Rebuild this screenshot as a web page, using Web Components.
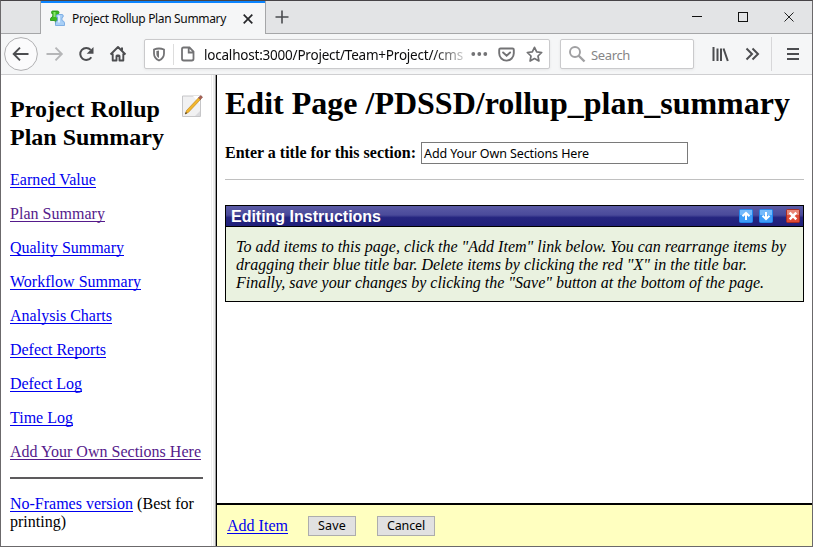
<!DOCTYPE html>
<html lang="en">
<head>
<meta charset="utf-8">
<title>Project Rollup Plan Summary</title>
<style>
html,body{margin:0;height:100%;overflow:hidden;background:#fff}
</style>
</head>
<body>
<browser-window></browser-window>
<script>
const define = (name, html, init) => {
  const t = document.createElement('template');
  t.innerHTML = html;
  customElements.define(name, class extends HTMLElement {
    constructor() {
      super();
      this.attachShadow({mode: 'open'}).append(t.content.cloneNode(true));
    }
    connectedCallback() { if (init) init(this); }
  });
};

/* One line of text, letter-spaced to fill the width given by its "w" attribute. */
define('fit-text', `<style>:host{display:inline-block;white-space:pre;flex:none;text-decoration:inherit}span{display:inline-block}</style><span><slot></slot></span>`, el => {
  const s = el.shadowRoot.querySelector('span');
  const w = +el.getAttribute('w');
  s.style.letterSpacing = '0';
  const n = el.textContent.length;
  s.style.letterSpacing = ((w - s.getBoundingClientRect().width) / n) + 'px';
});

define('nav-link', `<style>:host{display:block;height:18px;line-height:18px;color:#0000ee}
:host([visited]){color:#551a8b}a{display:block;width:max-content;height:16px;border-bottom:1px solid currentColor;color:inherit;text-decoration:none}</style><a><slot></slot></a>`);

define('push-button', `<style>:host{display:block;flex:none}button{display:flex;align-items:center;justify-content:center;width:100%;height:20px;box-sizing:border-box;border:1px solid #adadad;background:#e1e1e1;padding:0;margin:0;border-radius:0;font:12.5px/16px "Noto Sans",sans-serif;color:#000}</style><button><slot></slot></button>`);

define('tab-strip', `<style>
:host{display:flex;height:33px;background:#e3e4e6;box-sizing:border-box;font:12px/16px "Noto Sans",sans-serif;color:#0c0c0d}
.pre{width:39px;border-bottom:1px solid #a5a6a8}
.tab{width:224px;background:#f5f6f7;border:solid #a5a6a8;border-width:0 1px;display:flex;align-items:center;box-shadow:inset 0 2px #0a84ff;box-sizing:content-box}
.rest{flex:1;border-bottom:1px solid #a5a6a8;display:flex;align-items:center}
svg{display:block;flex:none}
.fav{margin:2px 6px 0 9px}
.tab fit-text{margin-top:3px}
.x{margin:3px 0 0 17px}
.plus{margin-left:9px}
.win{margin-left:auto}
</style>
<div class="pre"></div>
<div class="tab">
<svg class="fav" width="16" height="17" viewBox="0 0 16 17"><path d="M2.500 1h5q1.500 0 1.500 1.500T7.500 4l.3 3q1.700.3 1.700 2v1.500h-9V9q0-1.700 2-2L3 4Q1.500 4 1.500 2.500T2.500 1z" fill="#3db820" stroke="#1a8f0c" stroke-width=".8"/><path d="M4.500 10.500h2V13l-1 1.500z" fill="#4aa23a"/><path d="M3.500 2h2v5h-2z" fill="#8be670"/><path d="M7.500 4.500h4.500q1.300 0 1.300 1.500T12 7.500v3q2.500.5 2.500 2.500v2.500h-9V13q0-2 2-2.500v-3Q6.200 7.500 6.200 6t1.300-1.500z" fill="#a8cff6" stroke="#6ba2df" stroke-width=".8"/><path d="M8 5.500h2v7H8z" fill="#dcedff"/></svg>
<fit-text w="154">Project Rollup Plan Summary</fit-text>
<svg class="x" width="10" height="10" viewBox="0 0 10 10"><path d="M.7.7l8.600 8.600M9.300.7L.7 9.300" stroke="#26272a" stroke-width="1.700"/></svg>
</div>
<div class="rest">
<svg class="plus" width="14" height="14" viewBox="0 0 14 14"><path d="M7 .5v13M.5 7h13" stroke="#4a4b4f" stroke-width="1.600"/></svg>
<svg class="win" width="122" height="14" viewBox="0 0 122 14"><g fill="none" stroke="#111" shape-rendering="crispEdges"><path d="M2 6.500h10"/><path d="M48.500 2.500h9v9h-9z"/></g><path d="M94.500 2.500l9 9M103.500 2.500l-9 9" stroke="#222"/></svg>
</div>`);

define('nav-toolbar', `<style>
:host{display:flex;height:41px;box-sizing:border-box;background:#f5f6f7;border-bottom:1px solid #cfcfd1;align-items:center;font:13.5px/18px "Noto Sans",sans-serif}
svg{display:block;flex:none}
.url,.search{box-sizing:border-box;height:30px;border:1px solid #cacacc;border-radius:2px;background:#fff;display:flex;align-items:center;box-shadow:0 1px 3px #0001}
.url{width:406px;margin-left:1px}
.search{width:134px;margin-left:10px;color:#858587;font-size:13px}
.search fit-text{margin-top:1px}
.addr{margin:1px 0 0 9px;width:260px;overflow:hidden;color:#0c0c0d;-webkit-mask:linear-gradient(90deg,#000 228px,#0003 260px);mask:linear-gradient(90deg,#000 228px,#0003 260px)}
.addr fit-text{display:block}
</style>
<svg width="142" height="40" viewBox="0 0 142 40" fill="none" stroke="#4c4d50" stroke-width="1.900">
<circle cx="20" cy="20" r="16.400" fill="#fbfbfc" stroke="#b0b0b2" stroke-width="1"/>
<path d="M27.500 20H13M19 13.700L12.700 20l6.300 6.300"/>
<path d="M45.500 20H60M54.500 13.700l6.300 6.300-6.300 6.300" stroke="#b5b6b8"/>
<path d="M90.300 23.200a6 6 0 1 1-.6-7.300" stroke-width="2"/><path d="M92.500 13v6.800h-6.800z" fill="#4c4d50" stroke="none"/>
<path d="M109.500 20.500L117 13l7.500 7.500M111.700 19.500v7h3.800v-4.500h3v4.500h3.800v-7" stroke-linejoin="round"/><path d="M121 13.500v3" stroke-width="2"/><path d="M115.500 20.500h3v2h-3z" fill="#4c4d50" stroke="none"/>
</svg>
<div class="url">
<svg width="50" height="28" viewBox="0 0 50 28" fill="none" stroke="#737375"><path d="M14 8.500c2 0 3.500.4 5 1v4c0 3-1.700 5.500-5 7-3.300-1.500-5-4-5-7v-4c1.500-.6 3-1 5-1z" stroke-width="1.800"/><path d="M14 10.500v7.500c-2-1-2.600-2.500-2.600-4.300v-2.700z" fill="#737375" stroke="none"/><path d="M28.500 4v21" stroke="#ddd"/><path d="M38.500 7.500h6l4 4v7.300q0 1.700-1.700 1.700h-8.100q-1.700 0-1.700-1.700V9.200q0-1.700 1.500-1.700zM43.700 8v4.500h4.500" stroke-width="1.800"/></svg>
<div class="addr"><fit-text w="259">localhost:3000/Project/Team+Project//cms</fit-text></div>
<svg width="84" height="28" viewBox="-.5 0 84 28" fill="none" stroke="#737375" stroke-width="1.900"><g fill="#737375" stroke="none"><circle cx="8.800" cy="14" r="1.900"/><circle cx="14.800" cy="14" r="1.900"/><circle cx="20.800" cy="14" r="1.900"/></g><path d="M36 8.500h12q1.300 0 1.300 1.300v3.500a7.300 7.300 0 0 1-14.600 0V9.800q0-1.300 1.300-1.300z"/><path d="M38.600 12.500l3.500 3.300 3.500-3.300" stroke-linecap="round"/><path d="M70 7.300l2.200 4.600 5 .6-3.700 3.500.9 5-4.400-2.500-4.400 2.500.9-5-3.700-3.500 5-.6z" stroke-width="1.700" stroke-linejoin="round"/></svg>
</div>
<div class="search">
<svg width="30" height="28" viewBox="0 0 30 28" fill="none" stroke="#a0a0a2"><circle cx="14" cy="12" r="5" stroke-width="1.900"/><path d="M17.500 15.500l6 6" stroke-width="2.400"/></svg>
<fit-text w="39">Search</fit-text>
</div>
<svg width="117" height="40" viewBox="0 0 117 40" fill="none" stroke="#4c4d50" stroke-width="2"><path d="M19.500 13v14M23.500 14.500V27M27 14.500V27M29.500 14.500L33.800 27" stroke-width="2"/><path d="M52.500 14.500l5.500 5.500-5.500 5.500M58.500 14.500l5.500 5.500-5.500 5.500"/><path d="M77.500 3v34" stroke="#d7d7d9" stroke-width="1"/><path d="M93 15h12M93 20h12M93 25h12"/></svg>
`);

define('side-nav', `<style>
:host{display:block;width:210px;box-sizing:border-box;padding:20px 7px 0 9px;font:16px/18px "Liberation Serif",serif;color:#000;background:#fff}
header{display:flex;justify-content:space-between;height:56px;margin-bottom:20px}
h2{margin:0;font:bold 24px/28px "Liberation Serif",serif}
h2 fit-text{display:block}
header svg{margin:-1px 1px 0 0}
nav{display:grid;gap:16px}
hr{height:2px;border:0;background:#5d5b5d;margin:16px 0;width:193px}
.foot{display:flex}
.foot fit-text{display:block}
</style>
<header><h2><fit-text w="150">Project Rollup</fit-text><fit-text w="154">Plan Summary</fit-text></h2>
<svg width="22" height="24" viewBox="0 0 22 24"><path d="M1.500 2h18v20.500h-18z" fill="#f1f1f2" stroke="#c6c6c8"/><path d="M14 22l5-5v5z" fill="#d9d9dc"/><path d="M12 2h7v8z" fill="#fff"/><path d="M4.300 20l1.200-3.500L17.500 3.800l2 1.700L7.500 18.300z" fill="#f2b62c" stroke="#bb7e12" stroke-width=".6"/><path d="M17.500 3.800l2.200-2.300 1.800 1.600-2 2.400z" fill="#ad6152" stroke="#794640" stroke-width=".6"/><path d="M4 20.300l.9-2.300 1.200 1.200z" fill="#333"/></svg></header>
<nav>
<nav-link><fit-text w="86">Earned Value</fit-text></nav-link>
<nav-link visited><fit-text w="95">Plan Summary</fit-text></nav-link>
<nav-link><fit-text w="114">Quality Summary</fit-text></nav-link>
<nav-link><fit-text w="131">Workflow Summary</fit-text></nav-link>
<nav-link><fit-text w="102">Analysis Charts</fit-text></nav-link>
<nav-link><fit-text w="96">Defect Reports</fit-text></nav-link>
<nav-link><fit-text w="72">Defect Log</fit-text></nav-link>
<nav-link><fit-text w="63">Time Log</fit-text></nav-link>
<nav-link visited><fit-text w="191">Add Your Own Sections Here</fit-text></nav-link>
</nav><hr>
<div class="foot"><nav-link><fit-text w="123">No-Frames version</fit-text></nav-link><fit-text w="61"> (Best for</fit-text></div>
<fit-text w="56">printing)</fit-text>`);

define('instruction-panel', `<style>
:host{display:block;box-sizing:border-box;height:97px;border:1px solid #000;background:#eaf2e0;font:italic 16px/18px "Liberation Serif",serif}
header{display:flex;align-items:center;height:20px;border-bottom:1px solid #000;background:linear-gradient(#5b5ba6 0,#4a4a9a 45%,#25257f 58%,#20207b);color:#fff;font:bold 16px/20px "Liberation Sans",sans-serif;padding:0 2px 0 5px}
header fit-text{margin:1px auto 0 0}
svg{display:block;flex:none}
section{padding:11px 10px}
section fit-text{display:block}
</style>
<header><fit-text w="150">Editing Instructions</fit-text>
<svg width="62" height="14" viewBox="0 0 62 14"><g stroke-width="1"><rect x=".5" y=".5" width="13" height="13" rx="1" fill="#3e9cf8" stroke="#2187ed"/><path d="M1 1h12v5H1z" fill="#76bafb"/><rect x="20.500" y=".5" width="13" height="13" rx="1" fill="#3e9cf8" stroke="#2187ed"/><path d="M21 1h12v5H21z" fill="#76bafb"/><rect x="47.500" y=".5" width="13" height="13" rx="1" fill="#df4b36" stroke="#a92c22"/><path d="M48 1h12v5H48z" fill="#e98777"/></g><g fill="none" stroke="#fff" stroke-width="2"><path d="M7 11V4M3.500 7.300L7 3.800l3.500 3.500M27 3v7M23.500 6.700l3.500 3.500 3.500-3.500"/><path d="M50.700 3.700l6.600 6.600M57.300 3.700l-6.600 6.600" stroke-width="2.500"/></g></svg></header>
<section><fit-text w="550">To add items to this page, click the "Add Item" link below. You can rearrange items by</fit-text>
<fit-text w="511">dragging their blue title bar. Delete items by clicking the red "X" in the title bar.</fit-text>
<fit-text w="528">Finally, save your changes by clicking the "Save" button at the bottom of the page.</fit-text></section>`);

define('edit-page', `<style>
:host{display:block;padding:10px 8px 0;background:#fff;font:16px/18px "Liberation Serif",serif;color:#000;box-sizing:border-box}
h1{margin:0;font:bold 32px/36px "Liberation Serif",serif;height:36px}
.row{display:flex;margin-top:21px;height:22px;align-items:center;font-weight:bold}
.field{box-sizing:border-box;width:267px;height:22px;border:1px solid #7a7a7a;margin-left:5px;padding:1px 2px;font:12.5px/19px "Noto Sans",sans-serif}
hr{height:1px;border:0;background:#c0c0c0;margin:15px 0 25px}
</style>
<h1><fit-text w="565">Edit Page /PDSSD/rollup_plan_summary</fit-text></h1>
<div class="row"><fit-text w="191">Enter a title for this section:</fit-text><div class="field"><fit-text w="165">Add Your Own Sections Here</fit-text></div></div>
<hr>
<instruction-panel></instruction-panel>`);

define('action-bar', `<style>
:host{display:flex;box-sizing:border-box;height:43px;border-top:2px solid #000;background:#ffffc0;padding:11px 10px 0;font:16px/18px "Liberation Serif",serif}
nav-link{margin-top:1px}
.s{width:48px;margin-left:20px}.c{width:58px;margin-left:21px}
</style>
<nav-link><fit-text w="61">Add Item</fit-text></nav-link>
<push-button class="s"><fit-text w="28">Save</fit-text></push-button>
<push-button class="c"><fit-text w="38">Cancel</fit-text></push-button>`);

define('browser-window', `<style>
:host{display:flex;flex-direction:column;width:813px;height:547px;box-sizing:border-box;border:1px solid #6b696b;border-top-color:#474447;background:#fff}
.frames{flex:1;display:flex;min-height:0}
.split{width:6px;box-sizing:border-box;background:linear-gradient(90deg,#eee 1px,#fff 1px 2px,#ececec 2px 4px,#a0a0a0 4px 5px,#000 5px)}
.right{flex:1;display:flex;flex-direction:column;min-width:0}
edit-page{flex:1;min-height:0}
</style>
<tab-strip></tab-strip><nav-toolbar></nav-toolbar>
<div class="frames"><side-nav></side-nav><div class="split"></div><div class="right"><edit-page></edit-page><action-bar></action-bar></div></div>`);
</script>
</body>
</html>
